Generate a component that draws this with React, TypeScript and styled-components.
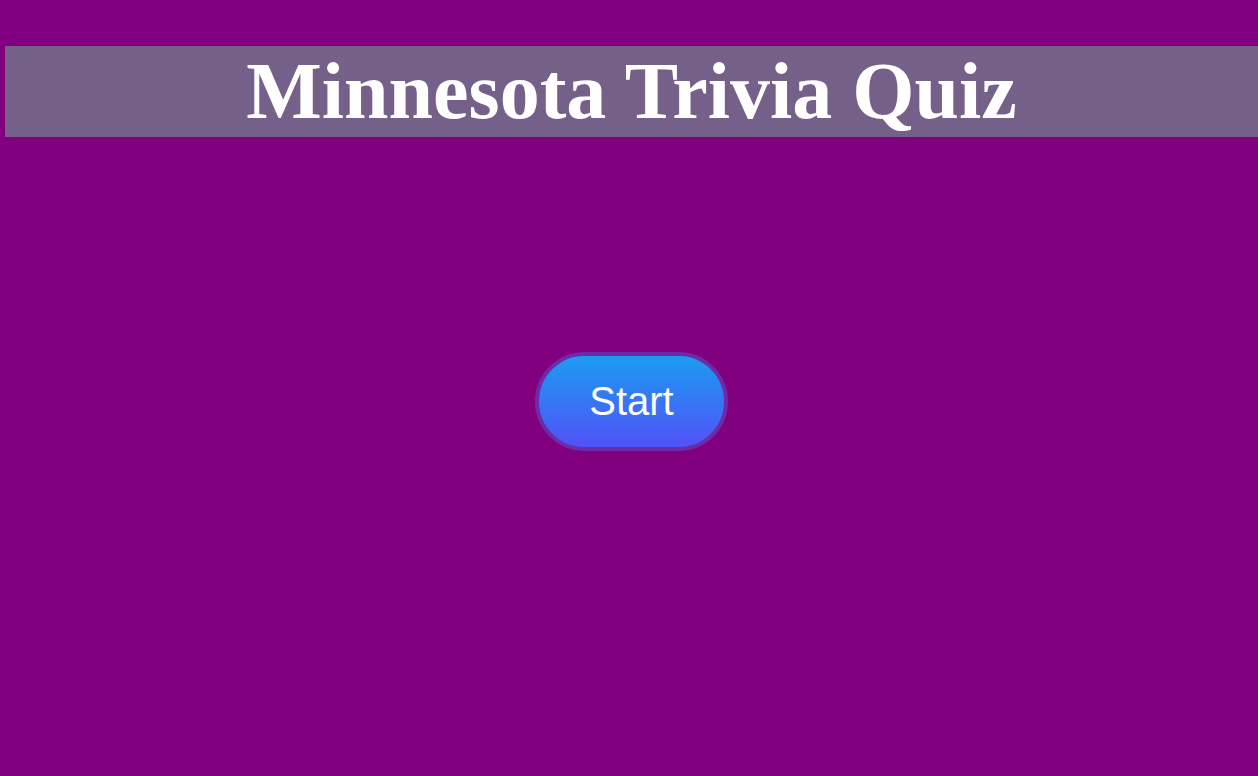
import React from "react";
import styled, { createGlobalStyle } from "styled-components";

const Global = createGlobalStyle`
  html, body { margin: 0; padding: 0; background: #800080; }
  body { min-height: 776px; }
`;

const Page = styled.div`
  display: flex;
  flex-direction: column;
  padding: 46px 0 0 5px;
  min-height: 776px;
  box-sizing: border-box;
`;

const Header = styled.header`
  background: #75608a;
  height: 91px;
  display: flex;
  align-items: center;
  justify-content: center;
`;

const Title = styled.h1`
  margin: 0;
  font-family: "Liberation Serif", "Times New Roman", serif;
  font-weight: bold;
  font-size: 80px;
  line-height: 1;
  color: #ffffff;
  transform: translateY(-1px);
`;

const Stage = styled.main`
  display: flex;
  justify-content: center;
  padding-top: 215px;
`;

const StartButton = styled.button`
  width: 193px;
  height: 99px;
  border-radius: 50px;
  border: 4px solid #6c2ca8;
  background: linear-gradient(to bottom, #1b9cf0, #5152f8);
  color: #ffffff;
  font-family: "Liberation Sans", Arial, sans-serif;
  font-size: 40px;
  padding: 0;
  cursor: pointer;
  box-sizing: border-box;
`;

export default function App() {
  return (
    <>
      <Global />
      <Page>
        <Header>
          <Title>Minnesota Trivia Quiz</Title>
        </Header>
        <Stage>
          <StartButton>Start</StartButton>
        </Stage>
      </Page>
    </>
  );
}
